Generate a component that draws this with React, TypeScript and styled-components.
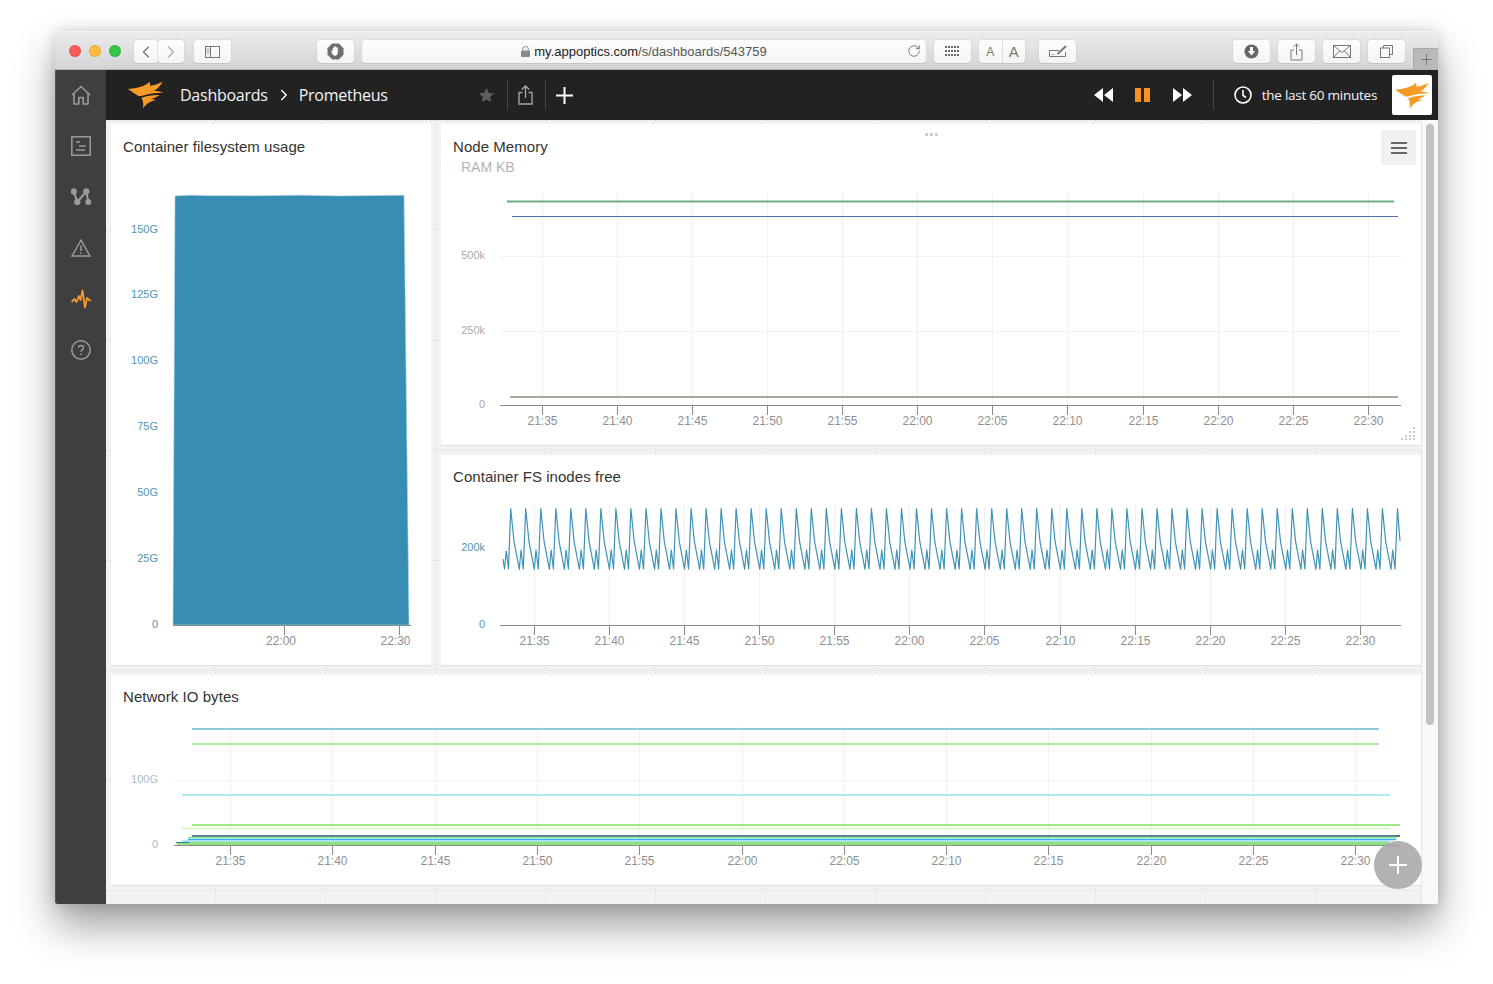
import React from "react";
import styled, { createGlobalStyle } from "styled-components";
import { ChevronLeft, ChevronRight, RotateCw } from "lucide-react";

const Global = createGlobalStyle`
  html, body { margin: 0; padding: 0; background: #fff; }
  body { font-family: "Liberation Sans", Arial, sans-serif; }
  * { box-sizing: border-box; }
`;

const Page = styled.div`
  width: 1493px;
  height: 984px;
  padding: 31px 55px 0;
  overflow: hidden;
  background: #fff;
`;
const Win = styled.div`
  width: 1383px;
  height: 873px;
  display: flex;
  flex-direction: column;
  border-radius: 5px 5px 3px 3px;
  overflow: hidden;
`;
const WinShadow = styled.div`
  border-radius: 5px;
  box-shadow: 0 22px 40px rgba(0, 0, 0, 0.38), 0 0 14px rgba(0, 0, 0, 0.16);
  width: 1383px;
  height: 873px;
`;

const TitleBar = styled.div`
  height: 39px;
  flex: none;
  display: flex;
  align-items: flex-start;
  padding-top: 8px;
  position: relative;
  background: linear-gradient(#ececec, #d5d4d5);
  border-bottom: 1px solid #b3b3b3;
  border-top: 1px solid #f5f5f5;
`;
const Light = styled.span<{ $c: string; $ml: number }>`
  width: 12px;
  height: 12px;
  flex: none;
  margin: 5px 0 0 ${(p) => p.$ml}px;
  border-radius: 50%;
  background: ${(p) => p.$c};
  border: 0.5px solid rgba(0, 0, 0, 0.1);
`;
const ToolBtn = styled.div<{ $w: number; $ml: number }>`
  width: ${(p) => p.$w}px;
  height: 23px;
  margin-left: ${(p) => p.$ml}px;
  flex: none;
  display: flex;
  align-items: center;
  justify-content: center;
  position: relative;
  border-radius: 4px;
  background: linear-gradient(#fefefe, #f3f3f3);
  box-shadow: 0 0 0 0.5px #cdcdcd, 0 1px 0 #bdbdbd;
  color: #6e6e6e;
`;
const UrlBar = styled(ToolBtn)`
  font-size: 13px;
  color: #555;
  white-space: nowrap;
`;
const Host = styled.span`
  color: #222;
`;
const LockIcon = styled.svg`
  margin-right: 4px;
  flex: none;
`;
const Reload = styled.span`
  position: absolute;
  right: 5px;
  top: 4px;
  display: flex;
  color: #6e6e6e;
`;
const AaPart = styled.span<{ $size: number; $line?: boolean }>`
  flex: 1;
  height: 100%;
  display: flex;
  align-items: center;
  justify-content: center;
  font-size: ${(p) => p.$size}px;
  color: #777;
  ${(p) => (p.$line ? "border-left: 1px solid #ddd;" : "")}
`;
const NewTab = styled.div`
  position: absolute;
  right: 0;
  top: 16px;
  bottom: 0;
  width: 25px;
  background: #b9b9b9;
  border-left: 1px solid #a8a8a8;
  border-top: 1px solid #a8a8a8;
  display: flex;
  align-items: center;
  justify-content: center;
  color: #777;
`;

const Body = styled.div`
  flex: 1;
  display: flex;
  min-height: 0;
`;
const Sidebar = styled.div`
  width: 51px;
  flex: none;
  background: #3f3f3f;
  border-left: 1px solid #555;
  display: flex;
  flex-direction: column;
  align-items: center;
  padding-top: 13px;
  gap: 27px;
`;
const SideIcon = styled.div<{ $on?: boolean }>`
  width: 24px;
  height: 24px;
  display: flex;
  align-items: center;
  justify-content: center;
  color: ${(p) => (p.$on ? "#f59a2a" : "#9b9b9b")};
`;
const Right = styled.div`
  flex: 1;
  min-width: 0;
  display: flex;
  flex-direction: column;
`;
const Nav = styled.div`
  height: 50px;
  flex: none;
  background: #222;
  display: flex;
  align-items: center;
  color: #fff;
  padding-left: 22px;
  & > * { flex: none; }
`;
const Crumb = styled.span<{ $ml: number }>`
  font-family: "Open Sans", sans-serif;
  font-size: 16px;
  letter-spacing: -0.25px;
  margin-left: ${(p) => p.$ml}px;
  color: #f4f4f4;
  white-space: nowrap;
`;
const NavSep = styled.span<{ $ml: number }>`
  width: 1px;
  height: 30px;
  background: #444;
  margin-left: ${(p) => p.$ml}px;
`;
const NavIcon = styled.span<{ $ml: number; $c?: string }>`
  display: flex;
  margin-left: ${(p) => p.$ml}px;
  color: ${(p) => p.$c || "#fff"};
`;
const Range = styled.span`
  font-family: "Open Sans", sans-serif;
  font-size: 13.5px;
  letter-spacing: -0.25px;
  margin-left: 10px;
  color: #f4f4f4;
  white-space: nowrap;
`;
const LogoBox = styled.div`
  width: 40px;
  height: 40px;
  margin-left: 15px;
  border-radius: 2px;
  background: #fff;
  display: flex;
  align-items: center;
  justify-content: center;
`;

const Content = styled.div`
  flex: 1;
  min-height: 0;
  display: flex;
  background: #f2f2f2;
  position: relative;
  &::before, &::after {
    content: "";
    position: absolute;
    inset: 0;
    pointer-events: none;
  }
  &::before {
    background: repeating-linear-gradient(to right, transparent 0 109px, #cfcfcf 109px 110px);
    -webkit-mask-image: repeating-linear-gradient(to bottom, #000 0 1px, transparent 1px 4px);
    mask-image: repeating-linear-gradient(to bottom, #000 0 1px, transparent 1px 4px);
  }
  &::after {
    background: repeating-linear-gradient(to bottom, #cfcfcf 0 1px, transparent 1px 110px);
    background-position: 0 0;
    -webkit-mask-image: repeating-linear-gradient(to right, #000 0 1px, transparent 1px 4px);
    mask-image: repeating-linear-gradient(to right, #000 0 1px, transparent 1px 4px);
  }
`;
const Board = styled.div`
  flex: 1;
  min-width: 0;
  display: grid;
  grid-template-columns: 320px 980px;
  grid-template-rows: 321px 210px 210px;
  gap: 10px;
  padding: 4px 0 0 5px;
  position: relative;
  z-index: 1;
  align-content: start;
`;
const Panel = styled.section<{ $area: string }>`
  grid-area: ${(p) => p.$area};
  background: #fff;
  position: relative;
  display: flex;
  flex-direction: column;
  box-shadow: 0 1px 1px rgba(0, 0, 0, 0.06);
`;
const PanelHead = styled.header<{ $top?: number }>`
  height: 50px;
  flex: none;
  padding: ${(p) => p.$top ?? 14}px 12px 0;
`;
const PanelTitle = styled.h3`
  margin: 0;
  font-size: 15px;
  font-weight: 400;
  line-height: 17px;
  letter-spacing: 0.05px;
  color: #333;
`;
const PanelSub = styled.div`
  margin: 4px 0 0 8px;
  font-size: 14px;
  line-height: 16px;
  color: #b4b4b4;
`;
const ChartSvg = styled.svg`
  flex: 1;
  display: block;
  width: 100%;
  min-height: 0;
`;
const MenuBtn = styled.div`
  position: absolute;
  right: 5px;
  top: 6px;
  width: 35px;
  height: 35px;
  background: #f0f0f0;
  display: flex;
  flex-direction: column;
  align-items: center;
  justify-content: center;
  gap: 3px;
`;
const MenuLine = styled.i`
  display: block;
  width: 16px;
  height: 2px;
  background: #666;
`;
const DragDots = styled.div`
  position: absolute;
  top: 9px;
  left: 484px;
  display: flex;
  gap: 2px;
`;
const DragDot = styled.i`
  display: block;
  width: 3px;
  height: 3px;
  background: #d0d0d0;
`;
const ResizeIcon = styled.svg`
  position: absolute;
  right: 5px;
  bottom: 5px;
`;

const Scrollbar = styled.div`
  width: 17px;
  flex: none;
  background: #f8f8f8;
  border-left: 1px solid #e6e6e6;
  padding: 4px 3px 0 4px;
  position: relative;
  z-index: 1;
`;
const Thumb = styled.div`
  height: 601px;
  width: 8px;
  border-radius: 4px;
  background: #c2c2c2;
`;
const Fab = styled.div`
  position: absolute;
  left: 1268px;
  top: 721px;
  width: 48px;
  height: 48px;
  border-radius: 50%;
  background: rgba(165, 165, 165, 0.85);
  z-index: 2;
  display: flex;
  align-items: center;
  justify-content: center;
  color: #fff;
`;

const Flame: React.FC<{ w: number; h: number }> = ({ w, h }) => (
  <svg width={w} height={h} viewBox="0 0 36 28" fill="#f79a26">
    <path d="M0 8 C6 7.500 11 6.500 15 5 C18 4 20 2.500 21.500 0.800 C22 2 22.300 3.300 22 4.800 C26 4.300 30 3 34.500 0.700 C32.500 4.500 30 7.500 26 9.800 C29 10 32 10.500 35.500 11.700 C29 11.600 23 12.300 17 14 C14.500 14.700 12.500 15.200 10.500 15 C7 13 3.500 10.500 0 8 Z" />
    <path d="M13.500 16.800 C19 14.800 25 13.800 31.500 14 C29 16 26 17.300 23 18 C25 18.200 26.500 18.500 28 19 C24 20 21 21.300 19 23 C17.500 24.300 16 25.800 14.800 27.500 C15.500 25 15.800 21.500 13.500 16.800 Z" />
  </svg>
);

const H = ["21:35","21:40","21:45","21:50","21:55","22:00","22:05","22:10","22:15","22:20","22:25","22:30"];
const GRID = "#f1f1f1";
const AXIS = "#8c8c8c";
const TICK = "#8f8f8f";

type Seg = { y: number; x1: number; x2: number; c: string; w?: number };

type XAxisProps = { y: number; x1: number; x2: number; top: number; x0: number; step: number; };
const XAxis: React.FC<XAxisProps> = ({ y, x1, x2, top, x0, step }) => (
  <g>
    {H.map((t, i) => {
      const x = Math.round(x0 + step * i) + 0.5;
      return (
        <g key={t}>
          <line x1={x} x2={x} y1={top} y2={y} stroke={GRID} />
          <line x1={x} x2={x} y1={y} y2={y + 10} stroke={AXIS} />
          <text x={x} y={y + 20} textAnchor="middle" fontSize={12} fill={TICK} fontFamily="Liberation Sans">{t}</text>
        </g>
      );
    })}
    <line x1={x1} x2={x2} y1={y + 0.5} y2={y + 0.5} stroke={AXIS} />
  </g>
);
const YLabel: React.FC<{ x: number; y: number; c: string; size?: number; children: React.ReactNode }> = ({ x, y, c, size = 11, children }) => (
  <text x={x} y={y} textAnchor="end" fontSize={size} fill={c} fontFamily="Liberation Sans">{children}</text>
);
const Segs: React.FC<{ items: Seg[] }> = ({ items }) => (
  <g>
    {items.map((s, i) => (
      <line key={i} x1={s.x1} x2={s.x2} y1={s.y} y2={s.y} stroke={s.c} strokeWidth={s.w ?? 1} />
    ))}
  </g>
);

const wave = (() => {
  const pts: string[] = ["503,559", "504.5,569", "506.3,551", "508.5,569"];
  for (let x0 = 510.7; x0 < 1396; x0 += 15.03) {
    [[0, 508.5], [3.3, 541.7], [8.6, 569.3], [10.3, 550], [12.6, 569]].forEach(([dx, y]) => {
      pts.push(`${(x0 + dx).toFixed(1)},${y}`);
    });
  }
  pts.push("1397.5,508.5", "1400,541");
  return pts.join(" ");
})();

const TEAL = "#5296b4";
const memLines: Seg[] = [
  { y: 201.5, x1: 507, x2: 1394, c: "#72ab82", w: 2 },
  { y: 216.5, x1: 512, x2: 1398, c: "#4f75a8", w: 1 },
  { y: 397, x1: 510, x2: 1398, c: "#85907a", w: 1.6 },
];
const netLines: Seg[] = [
  { y: 729, x1: 192, x2: 1379, c: "#6cb8d4", w: 1.5 },
  { y: 744, x1: 192, x2: 1379, c: "#8be585", w: 1.5 },
  { y: 795, x1: 182, x2: 1390, c: "#aeeaf3", w: 2 },
  { y: 825, x1: 192, x2: 1400, c: "#a0ec88", w: 2 },
  { y: 828.5, x1: 182, x2: 1390, c: "#d0f9b8", w: 1.5 },
  { y: 836, x1: 192, x2: 1400, c: "#1d4c5e", w: 1.5 },
  { y: 837.5, x1: 188, x2: 1397, c: "#8fe39a", w: 1.6 },
  { y: 839.5, x1: 188, x2: 1396, c: "#30b0ee", w: 1.6 },
  { y: 841.2, x1: 182, x2: 1390, c: "#a4dcf2", w: 2 },
  { y: 843.5, x1: 177, x2: 1388, c: "#8de27e", w: 3 },
  { y: 842.5, x1: 176, x2: 189, c: "#2a7fa8", w: 1 },
];

export default function App() {
  return (
    <Page>
      <Global />
      <WinShadow>
        <Win>
          <TitleBar>
            <Light $c="#fc5c57" $ml={14} />
            <Light $c="#fdbb3f" $ml={8} />
            <Light $c="#33c748" $ml={8} />
            <ToolBtn $w={24} $ml={13}><ChevronLeft size={20} strokeWidth={1.4} /></ToolBtn>
            <ToolBtn $w={26} $ml={0}><ChevronRight size={20} strokeWidth={1.4} color="#aaa" /></ToolBtn>
            <ToolBtn $w={37} $ml={10}>
              <svg width="15" height="12" viewBox="0 0 15 12" fill="none" stroke="#777"><rect x=".5" y=".5" width="14" height="11" /><line x1="5.5" x2="5.5" y1="0" y2="12" /><path d="M1.5 3h3M1.5 5h3M1.5 7h3" stroke="#999" /></svg>
            </ToolBtn>
            <ToolBtn $w={37} $ml={86}>
              <svg width="17" height="17" viewBox="0 0 17 17"><path d="M5.2 0.5h6.6L16.5 5.2v6.6L11.8 16.5H5.2L0.5 11.8V5.2Z" fill="#6e6e6e" /><path d="M5.8 8V5.2c0-1 1.2-1 1.2 0V4c0-1 1.3-1 1.3 0v.2c0-1 1.3-.9 1.3 .1v.8c0-.9 1.2-.9 1.2 0v4.4c0 2-1 3.2-2.7 3.2-1.4 0-2.2-.8-2.8-2L4.4 8.6c-.4-1 .7-1.5 1.4-.6Z" fill="#fff" /></svg>
            </ToolBtn>
            <UrlBar $w={564} $ml={8}>
              <LockIcon width="9" height="11" viewBox="0 0 9 11"><path d="M1.7 5V3.2a2.8 2.8 0 0 1 5.6 0V5" fill="none" stroke="#8a8a8a" /><rect x="0" y="4.6" width="9" height="6.4" rx="1" fill="#8a8a8a" /></LockIcon>
              <span><Host>my.appoptics.com</Host>/s/dashboards/543759</span>
              <Reload><RotateCw size={14} strokeWidth={1.5} /></Reload>
            </UrlBar>
            <ToolBtn $w={37} $ml={8}>
              <svg width="15" height="11" viewBox="0 0 15 11" fill="#666">
                {[0, 3, 6, 9, 12].map((x) => [0, 4, 8].map((y) => <rect key={`${x}-${y}`} x={x} y={y} width="2" height="2" />))}
              </svg>
            </ToolBtn>
            <ToolBtn $w={46} $ml={8}>
              <AaPart $size={12}>A</AaPart>
              <AaPart $size={15} $line>A</AaPart>
            </ToolBtn>
            <ToolBtn $w={37} $ml={14}>
              <svg width="18" height="13" viewBox="0 0 18 13" fill="none" stroke="#777"><path d="M10 5.5H.5v6h16V7" /><path d="M2.5 9.5h4" strokeDasharray="1 1" /><path d="M8.5 9l8.5-8" strokeWidth="1.8" /></svg>
            </ToolBtn>
            <ToolBtn $w={37} $ml={157}>
              <svg width="15" height="15" viewBox="0 0 15 15"><circle cx="7.5" cy="7.5" r="7" fill="#666" /><path d="M6 3h3v4h2.2L7.5 11.5 3.8 7H6Z" fill="#fff" /></svg>
            </ToolBtn>
            <ToolBtn $w={37} $ml={8}>
              <svg width="13" height="18" viewBox="0 0 13 18" fill="none" stroke="#777"><path d="M4 7H1v10h11V7H9" /><path d="M6.5 12V1M3.5 3.8 6.5 1l3 2.8" /></svg>
            </ToolBtn>
            <ToolBtn $w={37} $ml={8}>
              <svg width="18" height="13" viewBox="0 0 18 13" fill="none" stroke="#777"><rect x=".5" y=".5" width="17" height="12" /><path d="M.5 .5 9 7.5l8.500-7M.5 12.500 6.500 6M17.500 12.500 11.500 6" /></svg>
            </ToolBtn>
            <ToolBtn $w={37} $ml={8}>
              <svg width="13" height="13" viewBox="0 0 13 13" fill="none" stroke="#777"><rect x=".5" y="3" width="9" height="9.500" /><path d="M3.500 3V.5h9V9.500H9.500" /></svg>
            </ToolBtn>
            <NewTab>
              <svg width="11" height="11" viewBox="0 0 11 11" stroke="currentColor"><path d="M5.500 0v11M0 5.500h11" /></svg>
            </NewTab>
          </TitleBar>
          <Body>
            <Sidebar>
              <SideIcon>
                <svg width="20" height="20" viewBox="0 0 20 20" fill="none" stroke="currentColor" strokeWidth="1.600" strokeLinejoin="round"><path d="M1 10 10 1.500 19 10M3 8.500V19H7.800V12.500H12.200V19H17V8.500" /></svg>
              </SideIcon>
              <SideIcon>
                <svg width="20" height="20" viewBox="0 0 20 20" fill="none" stroke="currentColor" strokeWidth="1.500"><rect x=".8" y=".8" width="18.400" height="18.400" /><path d="M5 6h4M8 10h7M5 14h9" /></svg>
              </SideIcon>
              <SideIcon>
                <svg width="21" height="18" viewBox="0 0 21 18" fill="none" stroke="currentColor"><path d="M2.800 3.500 6.300 14 15.300 3.500 17.300 14" strokeWidth="2" /><circle cx="2.800" cy="3.500" r="2.800" fill="currentColor" /><circle cx="6.300" cy="14" r="2.800" fill="currentColor" /><circle cx="15.300" cy="3.500" r="2.800" fill="currentColor" /><circle cx="17.300" cy="14" r="2.600" fill="currentColor" /></svg>
              </SideIcon>
              <SideIcon>
                <svg width="20" height="18" viewBox="0 0 20 18" fill="none" stroke="currentColor" strokeWidth="1.400"><path d="M10 1.200 19 17H1Z" /><path d="M10 6.500v5.500M10 13.500v1.500" strokeWidth="1.600" /></svg>
              </SideIcon>
              <SideIcon $on>
                <svg width="20" height="20" viewBox="0 0 20 20" fill="none" stroke="currentColor" strokeWidth="1.800" strokeLinejoin="round"><path d="M.5 13 3.500 10 5.500 13 8 7 9.500 11 11.500 1.500 14 18.500 16 9 19.500 12" /></svg>
              </SideIcon>
              <SideIcon>
                <svg width="20" height="20" viewBox="0 0 20 20" fill="none" stroke="currentColor" strokeWidth="1.500"><circle cx="10" cy="10" r="9.200" /><path d="M7.500 7.800c0-3.200 5-3.200 5 0 0 2-2.500 2-2.500 4" /><path d="M10 13.500v1.600" /></svg>
              </SideIcon>
            </Sidebar>
            <Right>
              <Nav>
                <Flame w={36} h={28} />
                <Crumb $ml={16}>Dashboards</Crumb>
                <NavIcon $ml={7}><ChevronRight size={18} strokeWidth={2} /></NavIcon>
                <Crumb $ml={6}>Prometheus</Crumb>
                <NavIcon $ml={91} $c="#5f5f5f">
                  <svg width="15" height="14" viewBox="0 0 15 14" fill="currentColor"><path d="M7.500 0l2.200 4.800 5.300.6-3.900 3.500 1.100 5.100-4.700-2.600L2.800 14l1.100-5.100L0 5.400l5.300-.6Z" /></svg>
                </NavIcon>
                <NavSep $ml={13} />
                <NavIcon $ml={10} $c="#a8a8a8">
                  <svg width="15" height="20" viewBox="0 0 15 20" fill="none" stroke="currentColor" strokeWidth="1.300"><path d="M4.500 7.500H1v11.500h13V7.500h-3.500" /><path d="M7.500 13V1M3.800 4.500 7.500 1l3.700 3.500" /></svg>
                </NavIcon>
                <NavSep $ml={12} />
                <NavIcon $ml={10}>
                  <svg width="17" height="17" viewBox="0 0 17 17" stroke="currentColor" strokeWidth="2"><path d="M8.500 0v17M0 8.500h17" /></svg>
                </NavIcon>
                <NavIcon $ml={521}>
                  <svg width="19" height="14" viewBox="0 0 19 14" fill="currentColor"><path d="M9 0v14L0 7ZM19 0v14l-9-7Z" /></svg>
                </NavIcon>
                <NavIcon $ml={22} $c="#f7931e">
                  <svg width="15" height="14" viewBox="0 0 15 14" fill="currentColor"><rect width="6" height="14" /><rect x="9" width="6" height="14" /></svg>
                </NavIcon>
                <NavIcon $ml={23}>
                  <svg width="19" height="14" viewBox="0 0 19 14" fill="currentColor"><path d="M0 0v14l9-7ZM10 0v14l9-7Z" /></svg>
                </NavIcon>
                <NavSep $ml={21} />
                <NavIcon $ml={20}>
                  <svg width="18" height="18" viewBox="0 0 18 18" fill="none" stroke="currentColor" strokeWidth="1.600"><circle cx="9" cy="9" r="8" /><path d="M9 4v5.500l3 2" /></svg>
                </NavIcon>
                <Range>the last 60 minutes</Range>
                <LogoBox><Flame w={35} h={27} /></LogoBox>
              </Nav>
              <Content>
                <Board>
                  <Panel $area="1 / 1 / 3 / 2">
                    <PanelHead><PanelTitle>Container filesystem usage</PanelTitle></PanelHead>
                    <ChartSvg viewBox="111 174 320 491">
                      <path d="M175 196 L190 195.200 L210 195.700 L260 195.800 L300 195.200 L340 195.900 L404 195.300 L409 625 L173 625 Z" fill="#388db2" stroke="#a9d3e4" strokeWidth="0.6" />
                      {[["150G", 233], ["125G", 298], ["100G", 364], ["75G", 430], ["50G", 496], ["25G", 562], ["0", 628]].map(([t, y]) => (
                        <YLabel key={t} x={158} y={Number(y)} c={TEAL}>{t}</YLabel>
                      ))}
                      <line x1={173} x2={411} y1={625.5} y2={625.5} stroke={AXIS} />
                      <line x1={284.500} x2={284.500} y1={625} y2={635} stroke={AXIS} />
                      <line x1={399.500} x2={399.500} y1={625} y2={635} stroke={AXIS} />
                      <text x={281} y={645} textAnchor="middle" fontSize={12} fill={TICK}>22:00</text>
                      <text x={395.500} y={645} textAnchor="middle" fontSize={12} fill={TICK}>22:30</text>
                    </ChartSvg>
                  </Panel>
                  <Panel $area="1 / 2 / 2 / 3">
                    <DragDots><DragDot /><DragDot /><DragDot /></DragDots>
                    <PanelHead>
                      <PanelTitle>Node Memory</PanelTitle>
                      <PanelSub>RAM KB</PanelSub>
                    </PanelHead>
                    <MenuBtn><MenuLine /><MenuLine /><MenuLine /></MenuBtn>
                    <ChartSvg viewBox="441 174 980 271">
                      <line x1={500} x2={1401} y1={256.500} y2={256.500} stroke={GRID} />
                      <line x1={500} x2={1401} y1={331.500} y2={331.500} stroke={GRID} />
                      <XAxis y={405} x1={500} x2={1401} top={192} x0={541.7} step={75.1} />
                      <Segs items={memLines} />
                      <YLabel x={485} y={259} c="#aaa">500k</YLabel>
                      <YLabel x={485} y={334} c="#aaa">250k</YLabel>
                      <YLabel x={485} y={408} c="#aaa">0</YLabel>
                    </ChartSvg>
                    <ResizeIcon width="16" height="13" viewBox="0 0 16 13" fill="#c8c8c8">
                      {[[13, 0], [9, 4], [13, 4], [5, 8], [9, 8], [13, 8], [1, 11], [5, 11], [9, 11], [13, 11]].map(([x, y]) => (
                        <rect key={`${x}-${y}`} x={x} y={y} width="2" height="2" />
                      ))}
                    </ResizeIcon>
                  </Panel>
                  <Panel $area="2 / 2 / 3 / 3">
                    <PanelHead $top={13}><PanelTitle>Container FS inodes free</PanelTitle></PanelHead>
                    <ChartSvg viewBox="441 505 980 160">
                      <line x1={500} x2={1401} y1={548.500} y2={548.500} stroke={GRID} />
                      <XAxis y={625} x1={500} x2={1401} top={505} x0={533.8} step={75.1} />
                      <polyline points={wave} fill="none" stroke="#3f93b5" strokeWidth="1.200" strokeLinejoin="round" />
                      <YLabel x={485} y={551} c={TEAL}>200k</YLabel>
                      <YLabel x={485} y={628} c={TEAL}>0</YLabel>
                    </ChartSvg>
                  </Panel>
                  <Panel $area="3 / 1 / 4 / 3">
                    <PanelHead $top={13}><PanelTitle>Network IO bytes</PanelTitle></PanelHead>
                    <ChartSvg viewBox="111 725 1310 160">
                      <line x1={174} x2={1400} y1={781} y2={781} stroke={GRID} />
                      <XAxis y={845} x1={174} x2={1400} top={725} x0={230} step={102.3} />
                      <Segs items={netLines} />
                      <YLabel x={158} y={783} c="#a9bdbd">100G</YLabel>
                      <YLabel x={158} y={848} c="#a9bdbd">0</YLabel>
                    </ChartSvg>
                  </Panel>
                </Board>
                <Scrollbar><Thumb /></Scrollbar>
                <Fab>
                  <svg width="18" height="18" viewBox="0 0 18 18" stroke="currentColor" strokeWidth="2"><path d="M9 0v18M0 9h18" /></svg>
                </Fab>
              </Content>
            </Right>
          </Body>
        </Win>
      </WinShadow>
    </Page>
  );
}
